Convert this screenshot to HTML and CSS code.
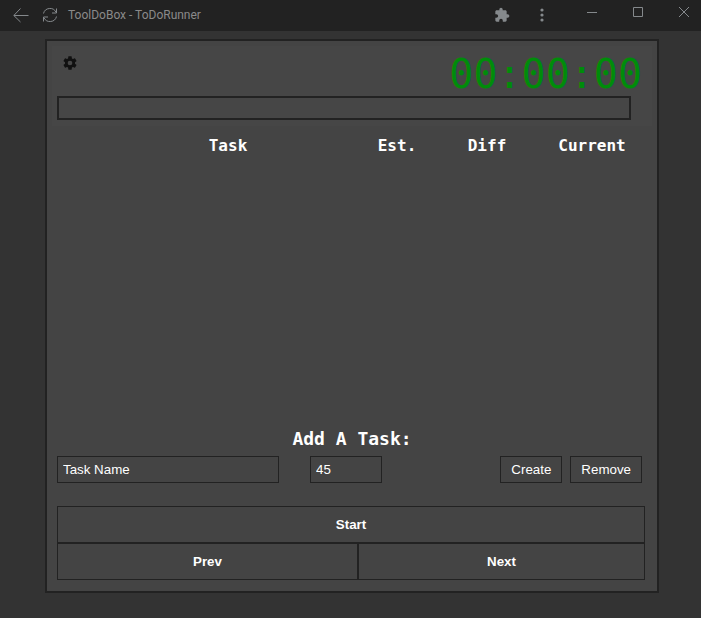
FILE: index.html
```html
<!DOCTYPE html>
<html lang="en">
<head>
  <meta charset="UTF-8">
  <meta name="viewport" content="width=device-width, initial-scale=1.0">
  <title>ToolDoBox - ToDoRunner</title>
  <link rel="stylesheet" href="styles.css">
</head>
<body>
  <!-- Window title bar -->
  <header class="titlebar">
    <button class="nav-btn" aria-label="Back">
      <svg width="16" height="16" viewBox="0 0 16 16"><path d="M15.500 8.500H1M7.500 1.500L.8 8.500l6.700 6.500"/></svg>
    </button>
    <button class="nav-btn" aria-label="Reload">
      <svg width="16" height="16" viewBox="0 0 16 16"><path d="M1.500 6.500A6.700 6.700 0 0 1 14 5.200M14.500 9.500A6.700 6.700 0 0 1 2 10.800M14.500 1.500v4.500h-4.500M1.500 14.500V10H6"/></svg>
    </button>
    <span class="title">ToolDoBox - ToDoRunner</span>
    <div class="app-btns">
      <button aria-label="Extensions">
        <svg class="solid" width="16" height="16" viewBox="0 0 24 24"><path d="M20.500 11H19V7c0-1.100-.9-2-2-2h-4V3.500a2.500 2.500 0 0 0-5 0V5H4c-1.100 0-2 .9-2 2v3.800h1.500a2.700 2.700 0 0 1 0 5.400H2V20c0 1.100.9 2 2 2h3.800v-1.500a2.700 2.700 0 0 1 5.400 0V22H17c1.100 0 2-.9 2-2v-4h1.500a2.500 2.500 0 0 0 0-5z"/></svg>
      </button>
      <button aria-label="Menu">
        <svg class="solid" width="4" height="14" viewBox="0 0 4 14"><circle cx="2" cy="2" r="1.600"/><circle cx="2" cy="7" r="1.600"/><circle cx="2" cy="12" r="1.600"/></svg>
      </button>
    </div>
    <div class="window-btns">
      <button aria-label="Minimize">
        <svg width="10" height="10" viewBox="0 0 10 10"><path d="M0 5.500h10"/></svg>
      </button>
      <button aria-label="Maximize">
        <svg width="10" height="10" viewBox="0 0 10 10"><path d="M.5.500h9v9h-9z"/></svg>
      </button>
      <button aria-label="Close">
        <svg width="10" height="10" viewBox="0 0 10 10"><path d="M0 0l10 10M10 0L0 10"/></svg>
      </button>
    </div>
  </header>

  <main class="runner">
    <!-- Settings, timer and progress -->
    <section class="top">
      <div class="top-row">
        <button class="settings" aria-label="Settings">
          <svg width="16" height="16" viewBox="0 0 24 24"><path d="M19.430 12.980c.04-.32.070-.64.070-.98s-.03-.66-.07-.98l2.110-1.650c.19-.15.240-.42.120-.64l-2-3.460c-.12-.22-.39-.3-.61-.22l-2.490 1c-.52-.4-1.080-.73-1.690-.98l-.38-2.650A.49.490 0 0 0 14 2h-4c-.25 0-.46.180-.49.420l-.38 2.650c-.61.250-1.170.590-1.690.980l-2.490-1c-.23-.09-.49 0-.61.220l-2 3.460c-.13.220-.07.490.120.640l2.110 1.650c-.04.320-.07.650-.07.980s.03.660.070.980l-2.110 1.650c-.19.150-.24.420-.12.640l2 3.460c.12.220.390.300.610.220l2.490-1c.52.400 1.080.730 1.690.980l.38 2.650c.03.240.240.420.490.420h4c.25 0 .46-.18.490-.42l.38-2.650c.61-.25 1.170-.59 1.690-.98l2.490 1c.23.090.49 0 .61-.22l2-3.460c.12-.22.070-.49-.12-.64l-2.110-1.650zM12 15.500a3.500 3.500 0 1 1 0-7 3.500 3.500 0 0 1 0 7z"/></svg>
        </button>
        <div class="timer">00:00:00</div>
      </div>
      <div class="progress"></div>
    </section>

    <!-- Task list -->
    <section class="tasks">
      <table>
        <thead>
          <tr>
            <th class="col-task">Task</th>
            <th class="col-num">Est.</th>
            <th class="col-num">Diff</th>
            <th class="col-current">Current</th>
          </tr>
        </thead>
        <tbody></tbody>
      </table>
    </section>

    <h2>Add A Task:</h2>
    <form class="add-task">
      <input class="task-name" type="text" value="Task Name" aria-label="Task name">
      <input class="task-time" type="text" value="45" aria-label="Estimated minutes">
      <div class="add-btns">
        <button type="button">Create</button>
        <button type="button">Remove</button>
      </div>
    </form>

    <div class="controls">
      <button class="start">Start</button>
      <button>Prev</button>
      <button>Next</button>
    </div>
  </main>
</body>
</html>
```
FILE: styles.css
```css
* {
  box-sizing: border-box;
}
body {
  margin: 0;
  min-height: 100vh;
  display: flex;
  flex-direction: column;
  background-color: #333;
  color: white;
  font-family: "Liberation Sans", Arial, sans-serif;
}
button,
input {
  margin: 0;
  border: 1px solid #222;
  border-radius: 0;
  background-color: #444;
  color: white;
  font-family: inherit;
}
button {
  cursor: pointer;
}

/* Title bar */
.titlebar {
  display: flex;
  align-items: center;
  height: 31px;
  padding: 0 0 2px 13px;
  background-color: #222;
  color: #8a8a8a;
}
.titlebar button {
  display: flex;
  align-items: center;
  justify-content: center;
  width: 34px;
  height: 28px;
  padding: 0;
  border: none;
  background: none;
  color: #85898c;
}
.titlebar svg {
  fill: none;
  stroke: currentColor;
}
.titlebar svg.solid {
  fill: currentColor;
  stroke: none;
}
.titlebar .nav-btn {
  width: 16px;
  margin-right: 13px;
}
.title {
  margin-left: -3px;
  font-family: Roboto, sans-serif;
  font-size: 12px;
}
.app-btns {
  display: flex;
  gap: 6px;
  margin-left: auto;
  margin-right: 16px;
}
.window-btns {
  display: flex;
  align-self: flex-start;
  gap: 12px;
}
.titlebar .window-btns button {
  height: 24px;
}

/* Main box */
.runner {
  flex: 1;
  display: flex;
  flex-direction: column;
  margin: 8px 42px 25px 45px;
  padding: 5px 5px 11px;
  border: 2px solid #222;
  background-color: #444;
}
.top {
  padding: 4px 5px 6px;
  background-color: #464646;
}
.top-row {
  display: flex;
  justify-content: space-between;
  align-items: flex-start;
  height: 46px;
  padding: 0 5px;
}
.settings {
  width: 16px;
  height: 16px;
  margin-top: 5px;
  padding: 0;
  border: none;
  background: none;
}
.settings svg {
  display: block;
  fill: #111;
}
.timer {
  color: #008c0a;
  font-family: "DejaVu Sans Mono", monospace;
  font-size: 40px;
  line-height: 48px;
}
.progress {
  height: 24px;
  margin-right: 16px;
  border: 2px solid #222;
}

.tasks {
  flex: 1;
  padding: 8px 0 0 52px;
}
table {
  width: 100%;
  table-layout: fixed;
  border-collapse: collapse;
}
th {
  padding: 0;
  font-family: "DejaVu Sans Mono", monospace;
  font-size: 16px;
  line-height: 24px;
}
.col-num {
  width: 90px;
}
.col-current {
  width: 120px;
}
h2 {
  margin: 0 0 5px;
  font-family: "DejaVu Sans Mono", monospace;
  font-size: 18px;
  line-height: 24px;
  text-align: center;
}

/* Add task form */
.add-task {
  display: flex;
  padding: 0 10px 0 5px;
}
.add-task input,
.add-task button {
  height: 27px;
  padding: 0 5px;
}
.task-name {
  flex: 0 1 222px;
  min-width: 0;
}
.task-time {
  width: 72px;
  margin-left: 31px;
}
.add-btns {
  display: flex;
  gap: 8px;
  margin-left: auto;
}
.add-task button {
  padding: 0 10px;
}

/* Start / prev / next */
.controls {
  display: grid;
  grid-template-columns: 301fr 287fr;
  margin: 23px 7px 0 5px;
}
.controls button {
  height: 37px;
  font-weight: bold;
}
.controls .start {
  grid-column: 1 / 3;
}
```
